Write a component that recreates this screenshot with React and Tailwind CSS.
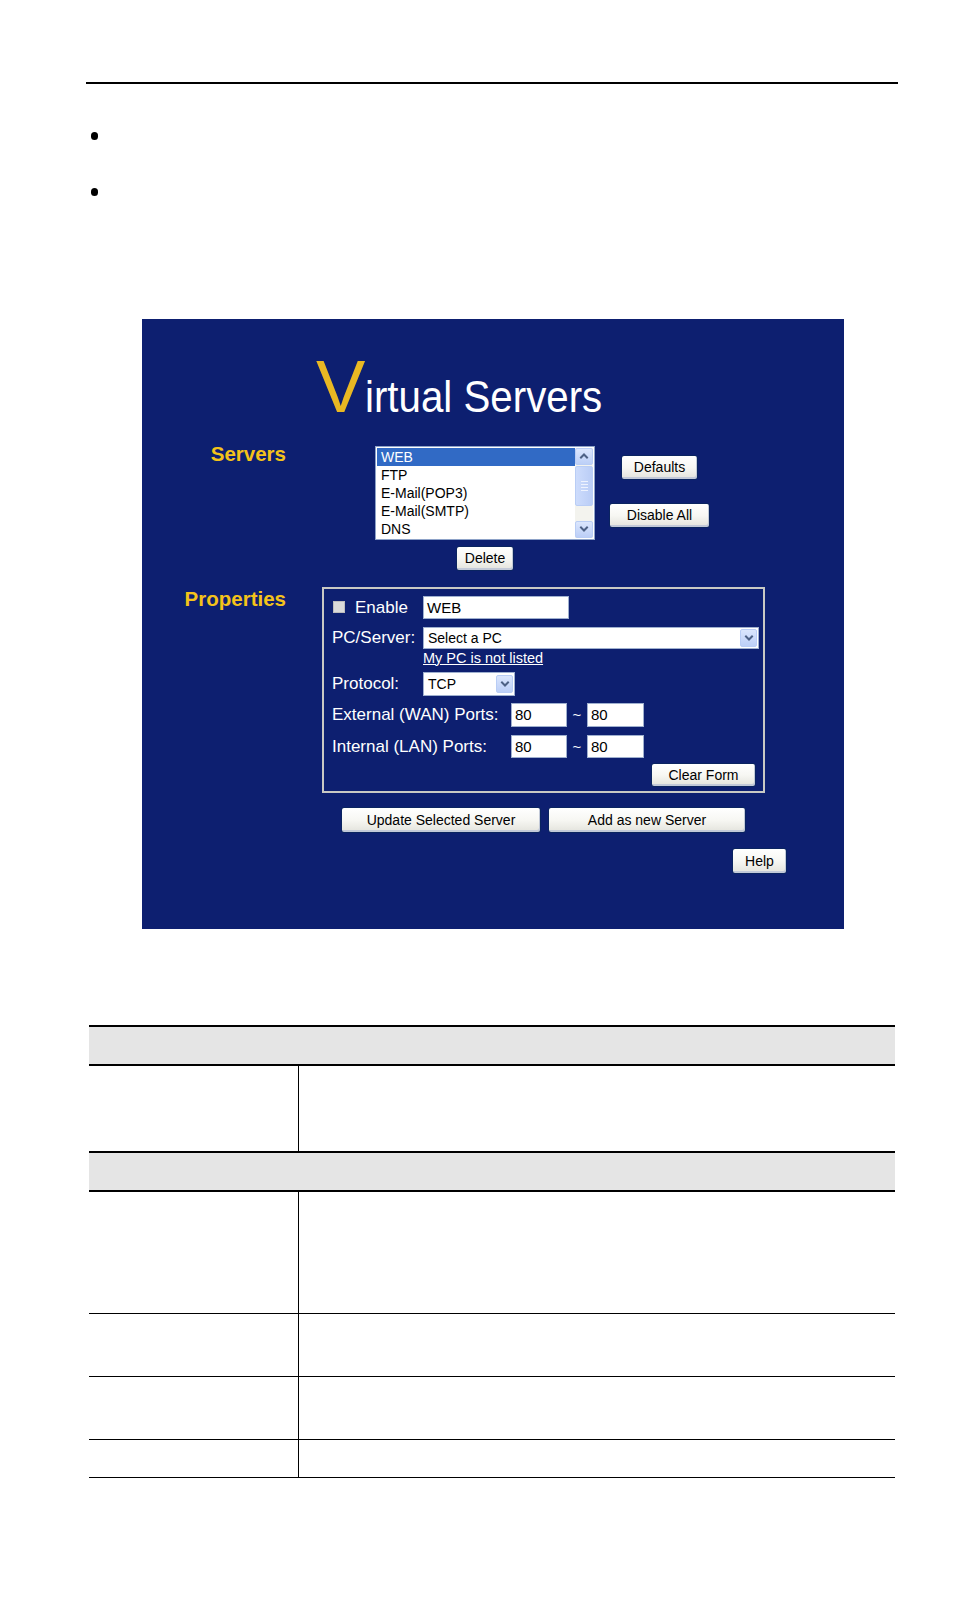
import React from "react";

const FONT = { fontFamily: '"Liberation Sans", Arial, sans-serif' };

const btn =
  "flex items-center justify-center rounded-[3px] border border-[#0a2460] bg-linear-to-b from-white via-[#f7f7f3] to-[#e3e3dc] text-[14px] leading-none text-black shadow-[inset_-1px_-2px_0_#c2c9d8]";

function Chevron({ up = false, className = "" }) {
  return (
    <svg viewBox="0 0 10 10" className={className}>
      <polyline
        points={up ? "2,6.5 5,3.5 8,6.5" : "2,3.5 5,6.5 8,3.5"}
        fill="none"
        stroke="#4d6185"
        strokeWidth="2"
        strokeLinecap="square"
      />
    </svg>
  );
}

function ArrowBox({ up, className = "" }) {
  return (
    <div
      className={
        "flex items-center justify-center rounded-[2px] border border-[#b9cdf5] bg-linear-to-b from-[#dbe6fd] to-[#bccff7] " +
        className
      }
    >
      <Chevron up={up} className="w-[10px] h-[10px]" />
    </div>
  );
}

function Scrollbar() {
  return (
    <div className="w-[18px] h-[90px] flex flex-col bg-[#f3f3ee]">
      <ArrowBox up className="w-[18px] h-[17px]" />
      <div className="mt-[1px] h-[40px] rounded-[2px] border border-[#b9cdf5] bg-linear-to-r from-[#cddcfc] to-[#bacdf6] flex flex-col items-center justify-center gap-[2px]">
        <div className="w-[7px] h-px bg-[#eef3fe]" />
        <div className="w-[7px] h-px bg-[#eef3fe]" />
        <div className="w-[7px] h-px bg-[#eef3fe]" />
        <div className="w-[7px] h-px bg-[#eef3fe]" />
      </div>
      <div className="flex-1" />
      <ArrowBox className="w-[18px] h-[17px]" />
    </div>
  );
}

function Listbox() {
  const items = ["FTP", "E-Mail(POP3)", "E-Mail(SMTP)", "DNS"];
  return (
    <div className="w-[220px] h-[94px] border border-[#8da2c8] bg-white p-px flex">
      <div className="flex-1 flex flex-col text-[14px] leading-[18px] text-black">
        <div className="bg-[#316ac5] text-white pl-[4px]">WEB</div>
        {items.map((t) => (
          <div key={t} className="pl-[4px]">
            {t}
          </div>
        ))}
      </div>
      <Scrollbar />
    </div>
  );
}

function TextInput({ value, className = "" }) {
  return (
    <div
      className={
        "bg-white border border-[#9fb0cf] flex items-center pl-[3px] text-[15px] leading-none text-black " +
        className
      }
    >
      {value}
    </div>
  );
}

function Select({ value, className = "" }) {
  return (
    <div
      className={
        "bg-white border border-[#9fb0cf] flex items-center pl-[4px] pr-px text-[14px] leading-none text-black " +
        className
      }
    >
      <span className="flex-1">{value}</span>
      <ArrowBox className="w-[17px] h-[18px]" />
    </div>
  );
}

function Panel() {
  return (
    <div className="ml-[142px] mt-[123px] w-[702px] h-[610px] bg-[#0d1f70] pt-[31px] text-white">
      {/* Title */}
      <div className="pl-[174px] flex items-baseline leading-none h-[74px]">
        <span className="text-[74px] leading-none text-[#e9b823]">V</span>
        <span className="inline-block text-[45px] leading-none text-white scale-x-[0.895] origin-left whitespace-nowrap">
          irtual Servers
        </span>
      </div>

      {/* Servers row */}
      <div className="mt-[20px] flex">
        <div className="w-[144px] text-right text-[20.5px] leading-[20px] font-bold text-[#f4c31a]">
          Servers
        </div>
        <div className="ml-[89px] mt-[2px] flex flex-col items-center">
          <Listbox />
          <button className={btn + " mt-[6px] w-[58px] h-[25px]"}>Delete</button>
        </div>
        <div className="ml-[14px] mt-[11px] w-[101px] flex flex-col items-center">
          <button className={btn + " w-[77px] h-[25px]"}>Defaults</button>
          <button className={btn + " mt-[23px] w-[101px] h-[25px]"}>Disable All</button>
        </div>
      </div>

      {/* Properties row */}
      <div className="mt-[16px] flex">
        <div className="w-[144px] mt-[2px] text-right text-[20.5px] leading-[20px] font-bold text-[#f4c31a]">
          Properties
        </div>
        <div className="ml-[36px] w-[443px] h-[206px] border-2 border-[#c9c9c4] pl-[8px] pt-[7px] flex flex-col text-[17px] leading-none">
          <div className="flex items-center h-[23px]">
            <div className="w-[91px] flex items-center">
              <div className="ml-px w-[12px] h-[12px] bg-[#dadada] border border-[#bdbdbd]" />
              <span className="ml-[10px]">Enable</span>
            </div>
            <TextInput value="WEB" className="w-[146px] h-[23px]" />
          </div>
          <div className="mt-[8px] flex items-center h-[22px]">
            <div className="w-[91px]">PC/Server:</div>
            <Select value="Select a PC" className="w-[336px] h-[22px]" />
          </div>
          <div className="mt-px ml-[91px] text-[14.5px] leading-[17px] underline">
            My PC is not listed
          </div>
          <div className="mt-[5px] flex items-center h-[24px]">
            <div className="w-[91px]">Protocol:</div>
            <Select value="TCP" className="w-[92px] h-[24px]" />
          </div>
          <div className="mt-[7px] flex items-center h-[24px]">
            <div className="w-[179px]">External (WAN) Ports:</div>
            <TextInput value="80" className="w-[56px] h-[24px]" />
            <div className="w-[20px] text-center text-[15px]">~</div>
            <TextInput value="80" className="w-[57px] h-[24px]" />
          </div>
          <div className="mt-[8px] flex items-center h-[23px]">
            <div className="w-[179px]">Internal (LAN) Ports:</div>
            <TextInput value="80" className="w-[56px] h-[23px]" />
            <div className="w-[20px] text-center text-[15px]">~</div>
            <TextInput value="80" className="w-[57px] h-[23px]" />
          </div>
          <div className="mt-[5px] flex justify-end pr-[7px]">
            <button className={btn + " w-[105px] h-[24px]"}>Clear Form</button>
          </div>
        </div>
      </div>

      {/* Bottom buttons */}
      <div className="mt-[14px] pl-[199px] flex gap-[7px]">
        <button className={btn + " w-[200px] h-[26px]"}>Update Selected Server</button>
        <button className={btn + " w-[198px] h-[26px]"}>Add as new Server</button>
      </div>
      <div className="mt-[15px] pl-[590px]">
        <button className={btn + " w-[55px] h-[26px]"}>Help</button>
      </div>
    </div>
  );
}

function Table() {
  return (
    <div className="ml-[89px] mt-[96px] w-[806px]">
      <div className="h-[41px] bg-[#e5e5e5] border-y-2 border-black" />
      <div className="flex h-[85px]">
        <div className="w-[210px] border-r border-black" />
      </div>
      <div className="h-[41px] bg-[#e5e5e5] border-y-2 border-black" />
      <div className="flex h-[122px] border-b border-black">
        <div className="w-[210px] border-r border-black" />
      </div>
      <div className="flex h-[63px] border-b border-black">
        <div className="w-[210px] border-r border-black" />
      </div>
      <div className="flex h-[63px] border-b border-black">
        <div className="w-[210px] border-r border-black" />
      </div>
      <div className="flex h-[38px] border-b border-black">
        <div className="w-[210px] border-r border-black" />
      </div>
    </div>
  );
}

export default function App() {
  return (
    <div className="w-[954px] h-[1612px] bg-white overflow-hidden" style={FONT}>
      <div className="pt-[82px]">
        <div className="ml-[86px] w-[812px] h-[1.5px] bg-black" />
      </div>
      <div className="ml-[91px] mt-[48px] flex flex-col gap-[48px]">
        <div className="w-[7px] h-[8px] rounded-full bg-black" />
        <div className="w-[7px] h-[8px] rounded-full bg-black" />
      </div>
      <Panel />
      <Table />
    </div>
  );
}
